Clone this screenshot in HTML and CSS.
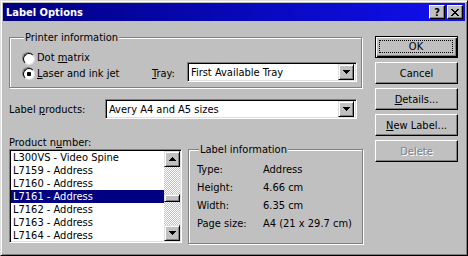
FILE: index.html
```html
<!DOCTYPE html>
<html lang="en">
<head>
    <meta charset="UTF-8">
    <title>Label Options</title>
    <link rel="stylesheet" href="styles.css">
</head>
<body>
    <div class="window">
        <div class="titlebar">
            <span class="title">Label Options</span>
            <div class="caption-btns">
                <span class="cap-btn help">?</span>
                <span class="cap-btn close">
                    <svg width="8" height="7" viewBox="0 0 8 7"><path d="M0 0h2v1H0zM6 0h2v1H6zM1 1h2v1H1zM5 1h2v1H5zM2 2h4v1H2zM3 3h2v1H3zM2 4h4v1H2zM1 5h2v1H1zM5 5h2v1H5zM0 6h2v1H0zM6 6h2v1H6z" fill="#000"/></svg>
                </span>
            </div>
        </div>

        <div class="client">
            <div class="main">
                <fieldset class="group printer">
                    <legend>Printer information</legend>
                    <div class="radio-row">
                        <span class="radio"></span>
                        <span>Dot <u>m</u>atrix</span>
                    </div>
                    <div class="radio-row second">
                        <div class="radio-label">
                            <span class="radio checked"></span>
                            <span><u>L</u>aser and ink jet</span>
                        </div>
                        <span class="tray-label"><u>T</u>ray:</span>
                        <div class="combo tray">
                            <span class="combo-text">First Available Tray</span>
                            <span class="drop-btn">
                                <svg width="7" height="4" viewBox="0 0 7 4"><path d="M0 0h7v1H0zM1 1h5v1H1zM2 2h3v1H2zM3 3h1v1H3z" fill="#000"/></svg>
                            </span>
                        </div>
                    </div>
                </fieldset>

                <div class="products-row">
                    <span class="products-label">Label <u>p</u>roducts:</span>
                    <div class="combo products">
                        <span class="combo-text">Avery A4 and A5 sizes</span>
                        <span class="drop-btn">
                            <svg width="7" height="4" viewBox="0 0 7 4"><path d="M0 0h7v1H0zM1 1h5v1H1zM2 2h3v1H2zM3 3h1v1H3z" fill="#000"/></svg>
                        </span>
                    </div>
                </div>

                <div class="lower">
                    <div class="product-col">
                        <div class="product-label">Product n<u>u</u>mber:</div>
                        <div class="listbox">
                            <ul class="items">
                                <li>L300VS - Video Spine</li>
                                <li>L7159 - Address</li>
                                <li>L7160 - Address</li>
                                <li class="selected">L7161 - Address</li>
                                <li>L7162 - Address</li>
                                <li>L7163 - Address</li>
                                <li>L7164 - Address</li>
                            </ul>
                            <div class="scrollbar">
                                <span class="scroll-btn">
                                    <svg width="7" height="4" viewBox="0 0 7 4"><path d="M3 0h1v1H3zM2 1h3v1H2zM1 2h5v1H1zM0 3h7v1H0z" fill="#000"/></svg>
                                </span>
                                <div class="track">
                                    <span class="thumb"></span>
                                </div>
                                <span class="scroll-btn">
                                    <svg width="7" height="4" viewBox="0 0 7 4"><path d="M0 0h7v1H0zM1 1h5v1H1zM2 2h3v1H2zM3 3h1v1H3z" fill="#000"/></svg>
                                </span>
                            </div>
                        </div>
                    </div>

                    <fieldset class="group info">
                        <legend>Label information</legend>
                        <div class="info-row"><span class="info-key">Type:</span><span>Address</span></div>
                        <div class="info-row"><span class="info-key">Height:</span><span>4.66 cm</span></div>
                        <div class="info-row"><span class="info-key">Width:</span><span>6.35 cm</span></div>
                        <div class="info-row"><span class="info-key">Page size:</span><span>A4 (21 x 29.7 cm)</span></div>
                    </fieldset>
                </div>
            </div>

            <div class="buttons">
                <span class="btn default"><span class="focus">OK</span></span>
                <span class="btn">Cancel</span>
                <span class="btn"><span><u>D</u>etails...</span></span>
                <span class="btn"><span><u>N</u>ew Label...</span></span>
                <span class="btn disabled">Delete</span>
            </div>
        </div>
    </div>
</body>
</html>
```

FILE: styles.css
```css
* {
    box-sizing: border-box;
}

body {
    margin: 0;
    background: #c0c0c0;
    font-family: "DejaVu Sans Condensed", "Liberation Sans", sans-serif;
    font-size: 11px;
    line-height: 13px;
    color: #000;
}

u {
    text-decoration-thickness: 1px;
    text-underline-offset: 1px;
}

.window {
    width: 468px;
    height: 256px;
    padding: 2px;
    background: #c0c0c0;
    border: 1px solid;
    border-color: #dfdfdf #000 #000 #dfdfdf;
    box-shadow: inset 1px 1px #fff, inset -1px -1px #808080;
    display: flex;
    flex-direction: column;
}

/* title bar */
.titlebar {
    height: 18px;
    padding: 0 2px 0 3px;
    background: linear-gradient(to right, #000080, #1010f0);
    display: flex;
    align-items: center;
    justify-content: space-between;
}

.title {
    color: #fff;
    font-weight: bold;
}

.caption-btns {
    display: flex;
    gap: 2px;
}

.cap-btn {
    width: 16px;
    height: 14px;
    background: #c0c0c0;
    border: 1px solid;
    border-color: #fff #000 #000 #fff;
    box-shadow: inset -1px -1px #808080;
    display: flex;
    align-items: center;
    justify-content: center;
}

.cap-btn.help {
    font-weight: bold;
    font-size: 11px;
    line-height: 11px;
}

/* client area */
.client {
    flex: 1;
    display: flex;
    padding-left: 6px;
}

.main {
    width: 354px;
    display: flex;
    flex-direction: column;
}

.group {
    margin: 0;
    border: 1px solid #808080;
    box-shadow: inset 1px 1px #fff, 1px 1px #fff;
}

.group legend {
    padding: 0 1px;
    margin-left: 2px;
    background: #c0c0c0;
    line-height: 13px;
}

.printer {
    width: 353px;
    margin-top: 10px;
    padding: 7px 4px 5px 12px;
}

.radio-row {
    display: flex;
    align-items: center;
    gap: 3px;
    height: 13px;
}

.radio-row.second {
    height: 20px;
    margin-top: -2px;
    gap: 0;
}

.radio-label {
    flex: 1;
    display: flex;
    align-items: center;
    gap: 3px;
    padding-top: 2px;
}

.radio {
    width: 12px;
    height: 12px;
    border-radius: 50%;
    border: 1px solid;
    border-color: #808080 #fff #fff #808080;
}

.radio::before {
    content: "";
    display: block;
    width: 10px;
    height: 10px;
    border-radius: 50%;
    border: 1px solid;
    border-color: #000 #dfdfdf #dfdfdf #000;
    background: #fff;
}

.radio.checked::before {
    background: radial-gradient(circle, #000 0 2px, #fff 2.5px);
}

.tray-label {
    width: 35px;
    padding-top: 2px;
}

/* combo boxes */
.combo {
    height: 20px;
    background: #fff;
    border: 1px solid;
    border-color: #808080 #fff #fff #808080;
    box-shadow: inset 1px 1px #000, inset -1px -1px #dfdfdf;
    display: flex;
    align-items: center;
    padding: 2px;
}

.combo.tray {
    width: 170px;
}

.combo-text {
    flex: 1;
    padding-left: 1px;
}

.drop-btn,
.scroll-btn {
    width: 16px;
    height: 16px;
    background: #c0c0c0;
    border: 1px solid;
    border-color: #dfdfdf #000 #000 #dfdfdf;
    box-shadow: inset 1px 1px #fff, inset -1px -1px #808080;
    display: flex;
    align-items: center;
    justify-content: center;
}

.drop-btn svg,
.scroll-btn svg {
    display: block;
}

.products-row {
    display: flex;
    align-items: center;
    margin-top: 11px;
}

.products-label {
    width: 96px;
}

.combo.products {
    width: 252px;
}

/* lower part */
.lower {
    display: flex;
    margin-top: 17px;
}

.product-col {
    width: 173px;
}

.listbox {
    height: 94px;
    background: #fff;
    border: 1px solid;
    border-color: #808080 #fff #fff #808080;
    box-shadow: inset 1px 1px #000, inset -1px -1px #dfdfdf;
    padding: 1px;
    display: flex;
}

.items {
    flex: 1;
    margin: 0;
    padding: 0;
    list-style: none;
    overflow: hidden;
}

.items li {
    height: 13px;
    padding-left: 2px;
    white-space: nowrap;
}

.items li.selected {
    background: #000080;
    color: #fff;
}

.scrollbar {
    width: 16px;
    display: flex;
    flex-direction: column;
}

.track {
    flex: 1;
    background: repeating-conic-gradient(#fff 0 25%, #c0c0c0 0 50%) 0 0 / 2px 2px;
    padding-top: 27px;
}

.thumb {
    display: block;
    height: 8px;
    background: #c0c0c0;
    border: 1px solid;
    border-color: #dfdfdf #000 #000 #dfdfdf;
    box-shadow: inset 1px 1px #fff, inset -1px -1px #808080;
}

.info {
    width: 175px;
    height: 101px;
    margin-left: 6px;
    margin-top: 7px;
    padding: 7px 4px 0 8px;
}

.info-row {
    display: flex;
    margin-bottom: 5px;
}

.info-key {
    width: 66px;
}

/* push buttons */
.buttons {
    margin-left: 12px;
    margin-top: 15px;
    display: flex;
    flex-direction: column;
    gap: 4px;
}

.btn {
    width: 83px;
    height: 22px;
    background: #c0c0c0;
    border: 1px solid;
    border-color: #fff #000 #000 #fff;
    box-shadow: inset -1px -1px #808080;
    display: flex;
    align-items: center;
    justify-content: center;
}

.btn.default {
    border-color: #000;
    box-shadow: inset 1px 1px #fff, inset -1px -1px #000, inset -2px -2px #808080;
    padding: 3px 4px 4px 3px;
}

.btn .focus {
    flex: 1;
    align-self: stretch;
    border: 1px dotted #000;
    display: flex;
    align-items: center;
    justify-content: center;
}

.btn.disabled {
    color: #808080;
    text-shadow: 1px 1px #fff;
}
```
